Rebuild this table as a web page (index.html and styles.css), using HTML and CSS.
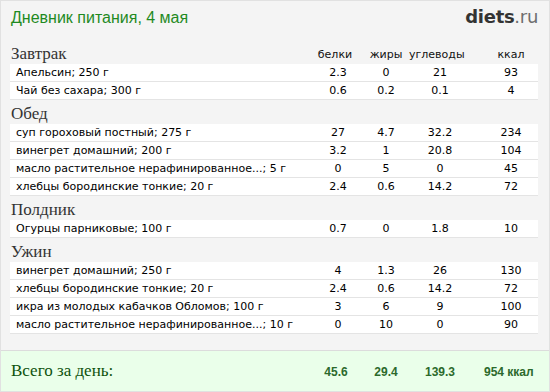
FILE: index.html
```html
<!DOCTYPE html>
<html lang="ru">
<head>
<meta charset="utf-8">
<title>Дневник питания</title>
<link rel="stylesheet" href="styles.css">
</head>
<body>
<div class="box">
  <div class="main">
    <div class="top">
      <div class="title">Дневник питания, 4 мая</div>
      <div class="logo"><b>diets</b>.ru</div>
    </div>

    <div class="head">
      <div class="name">Завтрак</div>
      <div class="c1 lbl">белки</div>
      <div class="c2 lbl">жиры</div>
      <div class="c3 lbl">углеводы</div>
      <div class="c4 lbl">ккал</div>
    </div>
    <div class="row"><div class="name">Апельсин; 250 г</div><div class="c1">2.3</div><div class="c2">0</div><div class="c3">21</div><div class="c4">93</div></div>
    <div class="row"><div class="name">Чай без сахара; 300 г</div><div class="c1">0.6</div><div class="c2">0.2</div><div class="c3">0.1</div><div class="c4">4</div></div>

    <div class="head"><div class="name">Обед</div></div>
    <div class="row"><div class="name">суп гороховый постный; 275 г</div><div class="c1">27</div><div class="c2">4.7</div><div class="c3">32.2</div><div class="c4">234</div></div>
    <div class="row"><div class="name">винегрет домашний; 200 г</div><div class="c1">3.2</div><div class="c2">1</div><div class="c3">20.8</div><div class="c4">104</div></div>
    <div class="row"><div class="name">масло растительное нерафинированное...; 5 г</div><div class="c1">0</div><div class="c2">5</div><div class="c3">0</div><div class="c4">45</div></div>
    <div class="row"><div class="name">хлебцы бородинские тонкие; 20 г</div><div class="c1">2.4</div><div class="c2">0.6</div><div class="c3">14.2</div><div class="c4">72</div></div>

    <div class="head"><div class="name">Полдник</div></div>
    <div class="row"><div class="name">Огурцы парниковые; 100 г</div><div class="c1">0.7</div><div class="c2">0</div><div class="c3">1.8</div><div class="c4">10</div></div>

    <div class="head"><div class="name">Ужин</div></div>
    <div class="row"><div class="name">винегрет домашний; 250 г</div><div class="c1">4</div><div class="c2">1.3</div><div class="c3">26</div><div class="c4">130</div></div>
    <div class="row"><div class="name">хлебцы бородинские тонкие; 20 г</div><div class="c1">2.4</div><div class="c2">0.6</div><div class="c3">14.2</div><div class="c4">72</div></div>
    <div class="row"><div class="name">икра из молодых кабачков Обломов; 100 г</div><div class="c1">3</div><div class="c2">6</div><div class="c3">9</div><div class="c4">100</div></div>
    <div class="row"><div class="name">масло растительное нерафинированное...; 10 г</div><div class="c1">0</div><div class="c2">10</div><div class="c3">0</div><div class="c4">90</div></div>
  </div>

  <div class="total">
    <div class="name">Всего за день:</div>
    <div class="c1 tv">45.6</div>
    <div class="c2 tv">29.4</div>
    <div class="c3 tv">139.3</div>
    <div class="c4 tv">954 ккал</div>
  </div>
</div>
</body>
</html>
```

FILE: styles.css
```css
* { box-sizing: border-box; }

html, body {
  margin: 0;
  padding: 0;
  background: #ffffff;
}

.box {
  width: 550px;
  height: 392px;
  border: 1px solid #e1e1e1;
  background: #f4f4f4;
  display: flex;
  flex-direction: column;
}

.main {
  padding: 0 11px 0 9px;
  height: 349px;
}

.top {
  height: 39px;
  padding-top: 7px;
  display: flex;
  align-items: baseline;
  justify-content: space-between;
}

.title {
  font-family: "Liberation Sans", Arial, sans-serif;
  font-size: 16px;
  line-height: 18px;
  color: #1f8a1f;
  padding-left: 1px;
}

.logo {
  font-family: "DejaVu Sans", Verdana, sans-serif;
  font-size: 18px;
  line-height: 18px;
  color: #6e6e6e;
  letter-spacing: -0.3px;
}

.logo b {
  color: #333333;
  font-weight: bold;
}

.head {
  height: 24px;
  display: flex;
  align-items: flex-end;
}

.head .name {
  align-self: flex-start;
  padding-top: 4px;
  padding-left: 1px;
  font-family: "Liberation Serif", "Times New Roman", serif;
  font-size: 17px;
  line-height: 20px;
  color: #333333;
}

.lbl {
  font-family: "DejaVu Sans", Verdana, sans-serif;
  font-size: 11px;
  line-height: 13px;
  padding-bottom: 3px;
  color: #111111;
}

.row {
  height: 18px;
  background: #ffffff;
  border-bottom: 1px solid #e4e4e4;
  display: flex;
  font-family: "DejaVu Sans", Verdana, sans-serif;
  font-size: 11px;
  line-height: 17px;
  color: #000000;
}

.row .name {
  padding-left: 6px;
}

.name {
  flex: 1;
  white-space: nowrap;
  overflow: hidden;
}

.c1, .c2, .c3, .c4 {
  text-align: center;
  white-space: nowrap;
}

.c1 { width: 50px; }
.c2 { width: 46px; }
.c3 { width: 62px; }
.c4 { width: 67px; padding-left: 13px; }

.head .c1 { padding-right: 6px; }
.head .c3 { padding-right: 8px; }

.total {
  height: 41px;
  border-top: 1px solid #dcdcdc;
  background: #eaffea;
  padding: 0 11px 0 10px;
  display: flex;
  align-items: baseline;
}

.total .name {
  font-family: "Liberation Serif", "Times New Roman", serif;
  font-size: 17px;
  line-height: 39px;
  color: #0d520d;
}

.tv {
  font-family: "Liberation Sans", Arial, sans-serif;
  font-weight: bold;
  font-size: 12px;
  color: #2c6a2c;
}

.total .c1 { padding-right: 4px; }
.total .c4 { padding-right: 6px; }
```
